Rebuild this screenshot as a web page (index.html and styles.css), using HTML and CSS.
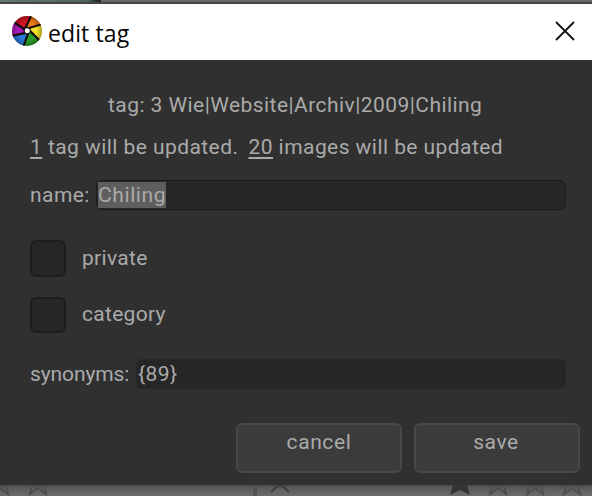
FILE: index.html
```html
<!DOCTYPE html>
<html lang="en">
<head>
<meta charset="utf-8">
<title>edit tag</title>
<link rel="stylesheet" href="styles.css">
</head>
<body>
<div class="backdrop-top"></div>
<section class="dialog">
  <header class="titlebar">
    <svg class="logo" viewBox="0 0 30 30">
      <defs><clipPath id="disc"><circle cx="15" cy="15" r="15"/></clipPath>
      <radialGradient id="shade"><stop offset=".65" stop-color="#000" stop-opacity="0"/><stop offset="1" stop-color="#000" stop-opacity=".3"/></radialGradient></defs>
      <g clip-path="url(#disc)" stroke="#160b0d" stroke-width="2">
        <path fill="#cf1424" d="M12 13 2 6 6-3H21L14 11Z"/>
        <path fill="#ee7918" d="M14 11 20-2 33 2 31 8 17 13Z"/>
        <path fill="#f2df28" d="M17 12 31 8 34 12V27L27 24 18 15Z"/>
        <path fill="#2b9c27" d="M18 15 28 25 22 33 10 32 16 18Z"/>
        <path fill="#2779d5" d="M16 17 11 32-2 28-1 20 13 17Z"/>
        <path fill="#a619b5" d="M13 17-1 20-3 15 1 6 12 13Z"/>
      </g>
      <circle cx="15" cy="15" r="15" fill="url(#shade)"/>
      <circle cx="15.3" cy="14.7" r="2.5" fill="#fff"/>
    </svg>
    <h1 class="title">edit tag</h1>
    <svg class="close" viewBox="0 0 20 20"><path d="M1 1 19 19M19 1 1 19"/></svg>
  </header>
  <main class="content">
    <p class="path">tag: 3 Wie|Website|Archiv|2009|Chiling</p>
    <p class="summary"><span><u>1</u> tag will be updated.</span><span><u>20</u> images will be updated</span></p>
    <div class="row name"><span>name:</span><div class="field outlined"><mark>Chiling</mark></div></div>
    <div class="row option"><i class="check tall"></i><span>private</span></div>
    <div class="row option second"><i class="check"></i><span>category</span></div>
    <div class="row synonyms"><span>synonyms:</span><div class="field">{89}</div></div>
  </main>
  <footer class="actions"><div class="button">cancel</div><div class="button save">save</div></footer>
</section>
<svg class="backdrop-bottom" viewBox="0 0 592 11">
  <defs>
    <linearGradient id="fall" x2="0" y2="1"><stop stop-color="#484848"/><stop offset=".25" stop-color="#5b5b5b"/><stop offset="1" stop-color="#6b6b6b"/></linearGradient>
    <path id="star" d="M-6-1-8 9 0 3 8 9 6-1"/>
  </defs>
  <path fill="url(#fall)" d="M0 0h592v11H0z"/>
  <path fill="#525252" d="M253 0h4v11h-4z"/>
  <path d="M271 7 280-1 289 7" fill="none" stroke="#3d3d3d" stroke-width="2"/>
  <g fill="none" stroke="#4e4e4e" stroke-width="2"><use href="#star" x="0"/><use href="#star" x="38"/><use href="#star" x="498"/><use href="#star" x="535"/><use href="#star" x="572"/></g>
  <path fill="#333" d="M453 0h14l3 10-10-5-10 5z"/>
</svg>
</body>
</html>
```
FILE: styles.css
```css
* { box-sizing: border-box; }
body { margin: 0; height: 496px; overflow: hidden; display: flex; flex-direction: column; background: #303030; color: #aaa; font: 21px/24px Roboto, sans-serif; letter-spacing: .44px; }
p, h1 { margin: 0; }
.backdrop-top { height: 4px; background: linear-gradient(90deg, #657673, #4e6563 88px, #263431 96px, #16201e 101px, transparent 101px) 0 0 / 100% 2px no-repeat, linear-gradient(#686868 0 2px, #444 2px); }
.dialog { height: 481px; display: flex; flex-direction: column; background: #303030; }
.titlebar { height: 56px; background: #fff; display: flex; align-items: center; padding: 0 17px 0 12px; }
.logo { width: 30px; height: 30px; margin-bottom: 3px; }
.title { flex: 1; margin-left: 6px; color: #050505; font: 23px/30px "Open Sans", sans-serif; letter-spacing: .1px; padding-top: 2px; }
.close { width: 20px; height: 20px; margin-bottom: 2px; fill: none; stroke: #111; stroke-width: 1.8; }
.content { height: 363px; padding: 33px 26px 0 30px; display: flex; flex-direction: column; }
.path { padding-left: 78px; white-space: nowrap; }
.summary { margin-top: 18px; display: flex; gap: 10px; white-space: nowrap; }
u { text-decoration-thickness: 2px; text-underline-offset: 3px; text-decoration-skip-ink: none; }
.row { display: flex; align-items: center; }
.name { margin-top: 21px; }
.name > span { flex: 0 0 66px; }
.field { flex: 1; height: 30px; padding: 3px 2px; border-radius: 6px; background: #262626; letter-spacing: .44px; }
.outlined { border: 1px solid #1b1b1b; padding: 1px; }
mark { display: inline-block; height: 26px; line-height: 26px; background: #5e5e5e; color: #aaa; letter-spacing: .6px; }
.option { gap: 16px; margin-top: 30px; letter-spacing: .3px; }
.option > span { padding-bottom: 2px; }
.second { margin-top: 20px; }
.check { width: 36px; height: 36px; border: 2px solid #1d1d1d; border-radius: 6px; background: #262626; }
.tall { height: 37px; }
.synonyms { margin-top: 26px; letter-spacing: -.1px; }
.synonyms > span { flex: 0 0 106px; }
.actions { display: flex; gap: 12px; justify-content: flex-end; padding-right: 12px; }
.button { width: 166px; height: 50px; border: 2px solid #484848; border-radius: 6px; background: #3b3b3b; text-align: center; padding-top: 5px; letter-spacing: .6px; }
.save { padding-right: 2px; }
.backdrop-bottom { width: 592px; height: 11px; display: block; }
```
